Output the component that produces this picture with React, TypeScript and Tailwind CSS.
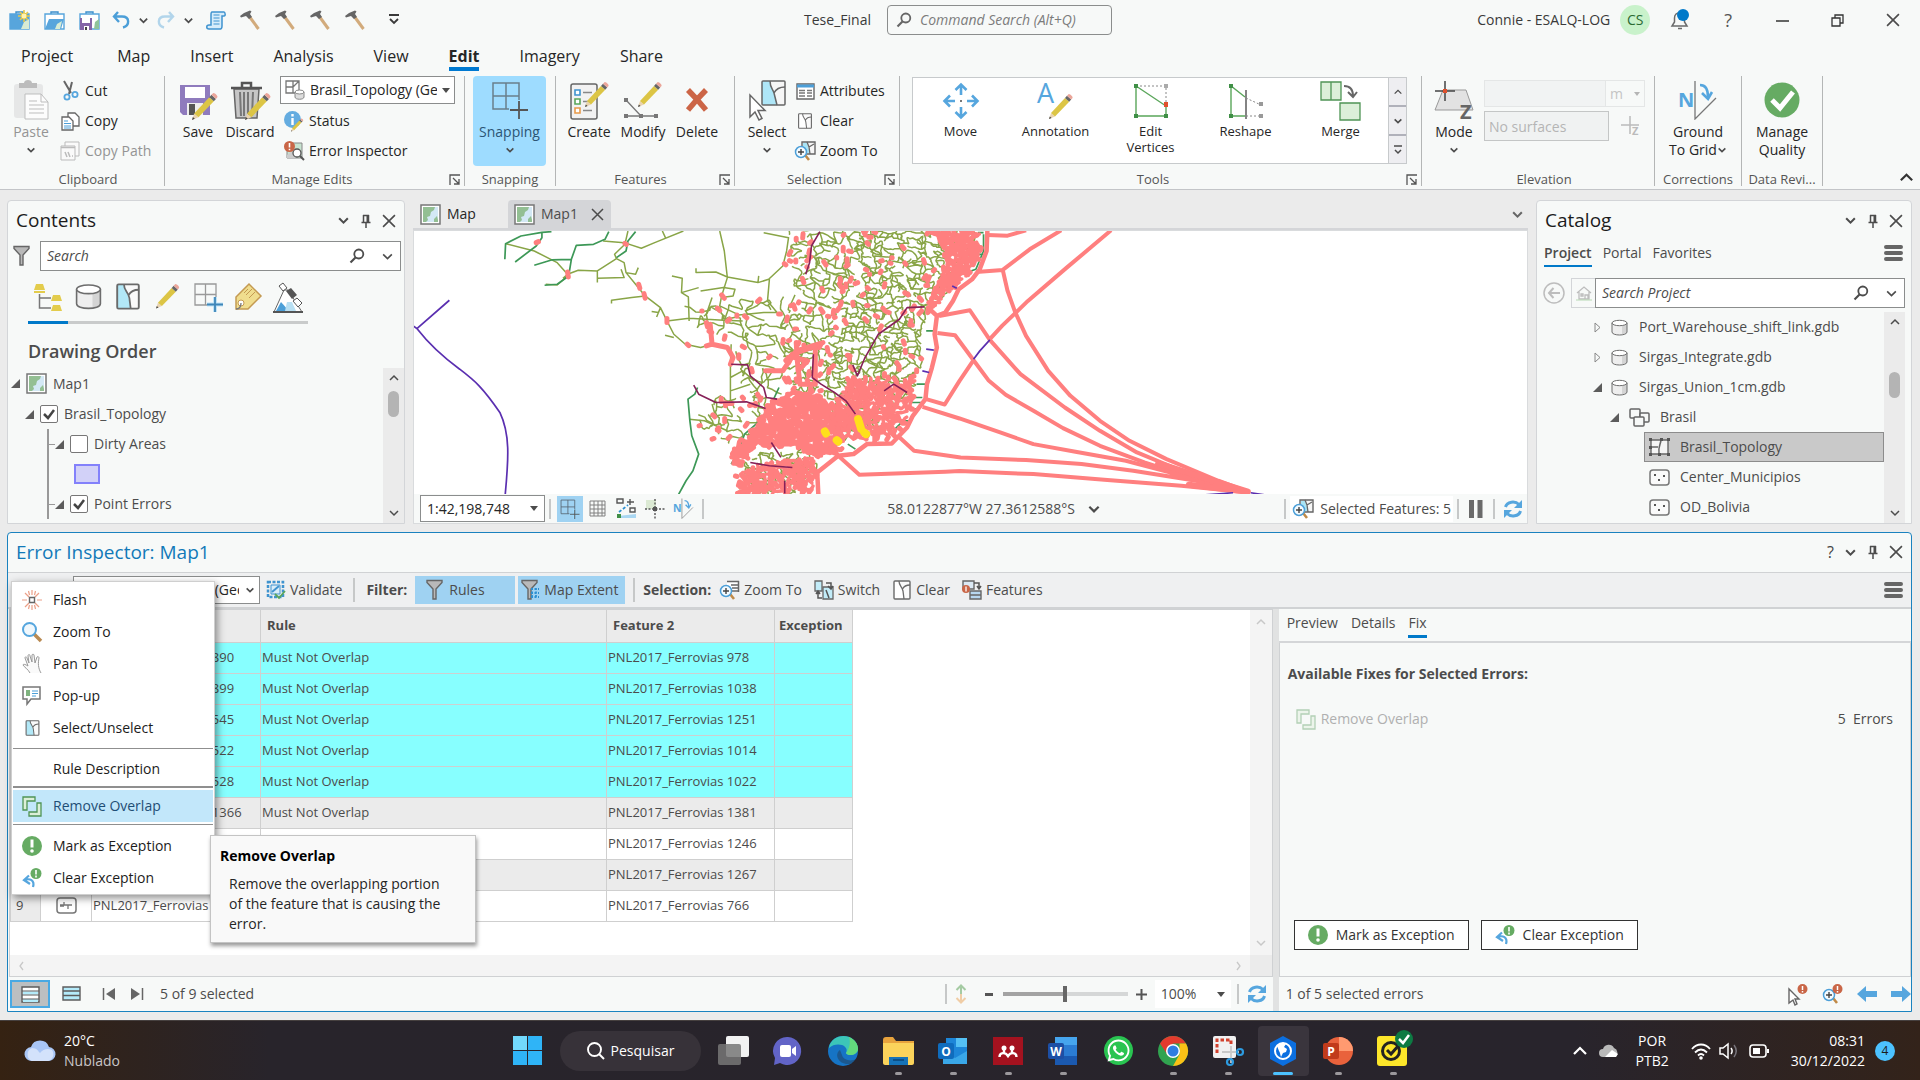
import type { ReactNode } from 'react'
import clsx from 'clsx'
import { FaWhatsapp } from 'react-icons/fa'

type Point = [number, number]

/* ---------- shared glyphs ---------- */

function Svg({ w, h = w, className, children }: { w: number; h?: number; className?: string; children: ReactNode }) {
  return (
    <svg width={w} height={h} viewBox={`0 0 ${w} ${h}`} fill="none" aria-hidden="true" className={clsx('shrink-0 overflow-visible', className)}>
      {children}
    </svg>
  )
}

function Chevron({ up = false, w = 12, color = '#4c4c4c', bold = false }: { up?: boolean; w?: number; color?: string; bold?: boolean }) {
  return (
    <svg width={w} height={w} viewBox="0 0 12 12" fill="none" stroke={color} strokeWidth={bold ? 1.9 : 1.5} aria-hidden="true" className="pointer-events-none shrink-0">
      <path d={up ? 'M2 8l4-4 4 4' : 'M2 4l4 4 4-4'} />
    </svg>
  )
}

function Caret() {
  return (
    <Svg w={8} h={5} className="pointer-events-none">
      <path d="M0 0h8L4 5z" fill="#4c4c4c" />
    </Svg>
  )
}

// Pencil drawn in a 24 unit box, tip at the lower left.
function Pencil({ x = 0, y = 0, s = 1 }: { x?: number; y?: number; s?: number }) {
  return (
    <g transform={`translate(${x} ${y}) scale(${s})`}>
      <path d="M0 24l2-6 4 3.500z" fill="#e9d3b0" />
      <path d="M0 24l.8-2.600 1.800 1.500z" fill="#444" />
      <path d="M2 18L16 3l4.200 3.800L6 21.500z" fill="#dcc545" />
      <path d="M16 3l2-2.200 4.200 3.800-2 2.200z" fill="#666" />
      <path d="M18 .8l1.500-1.600c1-1 5 2.800 4 3.800l-1.300 1.600z" fill="#eba69a" />
    </g>
  )
}

function SearchIcon({ w = 16, color = '#4c4c4c' }: { w?: number; color?: string }) {
  return (
    <svg width={w} height={w} viewBox="0 0 16 16" fill="none" stroke={color} aria-hidden="true" className="shrink-0">
      <circle cx="9.800" cy="6" r="4.500" strokeWidth="1.800" />
      <path d="M6.500 9.500L1.500 14.500" strokeWidth="2.200" />
    </svg>
  )
}

function PinIcon() {
  return (
    <Svg w={12} h={14}>
      <path d="M3.500 1v7M8.500 1v7M3 1.500h6M1.500 8.500h9M6 9v5" stroke="#4c4c4c" strokeWidth="1.500" />
      <path d="M7.500 1v7" stroke="#4c4c4c" strokeWidth="2" />
    </Svg>
  )
}

function CloseIcon({ w = 13 }: { w?: number }) {
  return (
    <svg width={w} height={w} viewBox="0 0 13 13" stroke="#4c4c4c" strokeWidth="1.500" aria-hidden="true" className="shrink-0">
      <path d="M1 1l11 11M12 1L1 12" />
    </svg>
  )
}

function BurgerIcon() {
  return (
    <Svg w={19} h={18}>
      <path d="M2 3h15M2 9h15M2 15h15" stroke="#666" strokeWidth="4" strokeLinecap="round" />
    </Svg>
  )
}

function RefreshIcon() {
  return (
    <Svg w={20}>
      <path d="M2.500 8C4 2.500 12 1.500 16 5.500M17.500 12C16 17.500 8 18.500 4 14.500" stroke="#56a6de" strokeWidth="3" />
      <path d="M19 1v8h-8zM1 19v-8h8z" fill="#56a6de" />
    </Svg>
  )
}

function MapIcon() {
  return (
    <Svg w={21}>
      <path d="M1 1h19v19H1z" fill="#fff" stroke="#777" strokeWidth="1.500" />
      <path d="M3 3h15v15H3z" fill="#d3e8f5" />
      <path d="M3 3h12l-1 3-3 2-1 4-3 1 1 3-2 2H3zM14 15l3-3 1 4v2h-4z" fill="#93bf93" />
    </Svg>
  )
}

function FunnelIcon({ extent = false }: { extent?: boolean }) {
  return (
    <Svg w={20} h={22}>
      <path d="M2 1.500h15v2L11 10v10H8V10L2 3.500z" fill="#b9b9b9" stroke="#666" strokeWidth="1.400" />
      {extent && <path d="M11 10h8M11 14h8M11 18h8M12 9v10M16 9v10" stroke="#2d8fd0" strokeWidth="1.800" strokeDasharray="2 1.500" />}
    </Svg>
  )
}

function SelectMapIcon({ w = 18, h = 20, fill = '#fff' }: { w?: number; h?: number; fill?: string }) {
  return (
    <svg width={w} height={h} viewBox="0 0 18 20" fill="none" aria-hidden="true" className="shrink-0">
      <rect x="1" y="1" width="16" height="18" rx="1" fill="#fafafa" />
      <path d="M1 1h5l3 8 2 10H1z" fill={fill} />
      <rect x="1" y="1" width="16" height="18" rx="1" stroke="#6a6a6a" strokeWidth="1.400" />
      <path d="M6 1c0 5 3 5 4 10l1 8M9.500 9C11 6 14 5 17 5" stroke="#6a6a6a" strokeWidth="1.300" />
    </svg>
  )
}

function MagnifyPlus() {
  return (
    <>
      <path d="M11 14l4 5" stroke="#c08a48" strokeWidth="2.600" />
      <circle cx="7" cy="11" r="5.500" fill="#f4fbff" stroke="#4c9fd8" strokeWidth="1.500" />
      <path d="M4 11h6M7 8v6" stroke="#444" strokeWidth="1.400" />
    </>
  )
}

function ZoomSelectionIcon() {
  return (
    <Svg w={22} h={20}>
      <path d="M8 1h13v12H8z" fill="#f6f6f6" stroke="#666" strokeWidth="1.400" />
      <path d="M9 2h4l3 10H9z" fill="#a9e4f5" />
      <path d="M13 1l2 5 1 7M15 6l5-3" stroke="#666" strokeWidth="1.300" />
      <MagnifyPlus />
    </Svg>
  )
}

function ZoomTableIcon() {
  return (
    <Svg w={21} h={20}>
      <path d="M8 1h12v11H8z" fill="#fff" />
      <path d="M8 1.500h12M12 5h8M13 8h7M13 11h7M19.500 1v11" stroke="#666" strokeWidth="1.500" />
      <MagnifyPlus />
    </Svg>
  )
}

function DatabaseIcon({ w = 17 }: { w?: number }) {
  return (
    <svg width={w} height={w} viewBox="0 0 17 17" fill="none" aria-hidden="true" className="shrink-0">
      <path d="M1 4v9c0 4 15 4 15 0V4" fill="#eee" />
      <path d="M11 6v9.500c3-.5 5-1.300 5-2.500V4z" fill="#d4d4d4" />
      <path d="M1 4v9c0 4 15 4 15 0V4" stroke="#6d6d6d" />
      <ellipse cx="8.500" cy="4" rx="7.500" ry="2.700" fill="#fff" stroke="#6d6d6d" />
    </svg>
  )
}

function TopologyIcon() {
  return (
    <Svg w={21} h={18}>
      <path d="M2 2h17v14H2z" fill="#f5f5f5" stroke="#666" strokeWidth="1.400" />
      <path d="M12 2c0 5-3 5-2 14M2 9h7M12 2l-2 8" stroke="#666" strokeWidth="1.400" />
      <path d="M0 0h3v3H0zM18 0h3v3h-3zM0 15h3v3H0zM18 15h3v3h-3zM11 0h3v3h-3zM9 15h3v3H9zM0 8h3v3H0z" fill="#555" />
    </Svg>
  )
}

function PointsIcon() {
  return (
    <Svg w={21} h={17}>
      <rect x="1" y="1" width="19" height="15" rx="3" fill="#fafafa" stroke="#777" strokeWidth="1.500" />
      <path d="M5 5h2v2H5zM14 6h2v2h-2zM9 10h2v2H9z" fill="#555" />
    </Svg>
  )
}

function BoxesIcon() {
  return (
    <Svg w={21} h={19}>
      <g fill="#f7f9f8" stroke="#666" strokeWidth="1.500">
        <rect x="1" y="1" width="10" height="9" rx="1" />
        <rect x="11" y="5" width="9" height="9" rx="1" />
        <rect x="5" y="9" width="10" height="9" rx="1" />
      </g>
    </Svg>
  )
}

function SnapIcon({ color = '#6a7f8c', w = 28 }: { color?: string; w?: number }) {
  return (
    <svg width={w} height={w} viewBox="0 0 38 38" fill="none" aria-hidden="true" className="shrink-0">
      <path d="M2 2h26v26H2zM15 2v26M2 15h26" stroke={color} strokeWidth="1.500" />
      <path d="M27 19v19M18 29h18" stroke="#9edcff" strokeWidth="5" />
      <path d="M28 20v18M19 29h18" stroke="#555" strokeWidth="1.800" />
    </svg>
  )
}

function OverlapIcon({ faded = false }: { faded?: boolean }) {
  return (
    <Svg w={20} h={21} className={faded ? 'opacity-40' : undefined}>
      <g fill="#dcefd8" stroke="#4f9455" strokeWidth="1.300">
        <path d="M1 1h12v4H5v9H1z" />
        <path d="M19 7v13H7v-4h8V7z" />
      </g>
    </Svg>
  )
}

function ExclaimIcon() {
  return (
    <Svg w={20}>
      <circle cx="10" cy="10" r="10" fill="#66ab63" />
      <path d="M10 3.500v8" stroke="#fff" strokeWidth="3" />
      <circle cx="10" cy="15" r="1.800" fill="#fff" />
    </Svg>
  )
}

function ClearExceptionIcon() {
  return (
    <Svg w={20}>
      <circle cx="14" cy="5.500" r="5.500" fill="#66ab63" />
      <path d="M14 2v4.500M14 7.500v2" stroke="#fff" strokeWidth="1.600" />
      <path d="M2 12c6-2 11 0 9 7M7 7.500L2 12l6 4" stroke="#56a6de" strokeWidth="2.200" />
    </Svg>
  )
}

function MoveArrows() {
  return (
    <path
      d="M18 2v10M18 24v10M2 18h10M24 18h10M12.500 7L18 1.500 23.500 7M12.500 29l5.500 5.500 5.500-5.500M7 12.500L1.500 18 7 23.500M29 12.500l5.500 5.500-5.500 5.500"
      stroke="#56a6de"
      strokeWidth="2.600"
    />
  )
}

function NorthAngle({ w = 40 }: { w?: number }) {
  return (
    <svg width={w} height={w} viewBox="0 0 40 40" fill="none" aria-hidden="true" className="shrink-0">
      <text x="0" y="27" fontSize="20" fontWeight="700" fill="#56a6de">N</text>
      <path d="M17 1v38L38 18" stroke="#777" strokeWidth="1.300" />
      <path d="M22 5c6 0 8 5 8 12" stroke="#56a6de" strokeWidth="2.600" />
      <path d="M24 13l6 6 4-7" stroke="#56a6de" strokeWidth="2.600" />
    </svg>
  )
}

/* ---------- title bar ---------- */

function ProjectIcon({ kind }: { kind: 'new' | 'open' | 'save' }) {
  return (
    <Svg w={21} h={20}>
      <path d="M7 5V2h7v3" stroke="#3c8fcc" strokeWidth="1.400" />
      <path d="M1 4h19v15H1z" fill={kind === 'new' ? '#57a5dc' : '#fff'} stroke="#57a5dc" strokeWidth="1.400" />
      {kind === 'new' && (
        <>
          <path d="M12 19l3-7 5-3v10z" fill="#d8ecd4" />
          <path d="M15 0v12M9 6h12M11 2l8 8M19 2l-8 8" stroke="#e3c84f" strokeWidth="1.600" />
          <circle cx="15" cy="6" r="3" fill="#fff3b0" stroke="#e3c84f" />
        </>
      )}
      {kind === 'open' && <path d="M1 19L5 9h15l-3 10z" fill="#57a5dc" />}
      {kind === 'open' && <path d="M11 19l2-5 5-3-2 8z" fill="#d8ecd4" />}
      {kind === 'save' && (
        <>
          <path d="M15 19l1-7 4-3v10z" fill="#8fc39a" />
          <path d="M1 8h12v12H1z" fill="#8566a8" />
          <path d="M3 8h8v5H3zM5 16h5v4H5z" fill="#fff" />
          <path d="M6 17h2v3H6z" fill="#444" />
        </>
      )}
    </Svg>
  )
}

function UndoIcon({ flip = false }: { flip?: boolean }) {
  return (
    <Svg w={18} h={18} className={flip ? '-scale-x-100 opacity-40' : undefined}>
      <path d="M6 1L2 5.500 7 11M2 5.500h8c8 0 8 9 1 11" stroke="#4c9fd8" strokeWidth="2.400" />
    </Svg>
  )
}

function HammerIcon() {
  return (
    <Svg w={20}>
      <path d="M9 6l9.500 13" stroke="#d2ab7c" strokeWidth="3" />
      <path d="M0 6l4-3 6-2.500 1.500 1L10 4l2 3-3 2-3-3-5 1.500z" fill="#666" />
    </Svg>
  )
}

function TitleBar() {
  return (
    <header className="grid h-10 grid-cols-[1fr_auto_1fr] items-center text-sm text-[#3a3a3a]">
      <div className="flex items-center pl-[9px]">
        <button aria-label="New project" className="mr-3.5"><ProjectIcon kind="new" /></button>
        <button aria-label="Open project" className="mr-3.5"><ProjectIcon kind="open" /></button>
        <button aria-label="Save project" className="mr-3"><ProjectIcon kind="save" /></button>
        <button aria-label="Undo" className="mr-2"><UndoIcon /></button>
        <button aria-label="Undo list" className="mr-2"><Chevron w={11} bold /></button>
        <button aria-label="Redo" className="mr-2"><UndoIcon flip /></button>
        <button aria-label="Redo list" className="mr-3"><Chevron w={11} bold /></button>
        <button aria-label="Python" className="mr-3.5">
          <Svg w={20}>
            <path d="M6 2h12c1 0 2 4 0 4h-2v10c0 3-1 3-3 3H3c-3 0-3-4 0-4h2V5c0-2 0-3 1-3z" fill="#d6ecfa" stroke="#3f93cf" strokeWidth="1.500" />
            <path d="M7.500 5h6M7.500 8h6M7.500 11h6M7.500 14h6" stroke="#3f93cf" strokeWidth="1.200" />
          </Svg>
        </button>
        {[1, 2, 3, 4].map((n) => (
          <button key={n} aria-label={`Tool ${n}`} className="mr-[15px]"><HammerIcon /></button>
        ))}
        <button aria-label="Customize toolbar" className="ml-2">
          <Svg w={12} h={12}><path d="M1 1h10M2 5l4 4 4-4" stroke="#3a3a3a" strokeWidth="1.800" /></Svg>
        </button>
      </div>
      <div className="flex items-center gap-4 pr-1">
        <span>Tese_Final</span>
        <label className="flex h-[30px] w-[225px] items-center gap-2 rounded border border-[#8b8d8d] px-2">
          <SearchIcon w={16} color="#666" />
          <input aria-label="Command Search" placeholder="Command Search (Alt+Q)" className="min-w-0 flex-1 italic outline-none placeholder:text-[#7c7c7c]" />
        </label>
      </div>
      <div className="flex items-center justify-end pr-5">
        <span className="mr-2.5">Connie - ESALQ-LOG</span>
        <button className="mr-5 flex size-[30px] items-center justify-center rounded-full bg-[#c9f2cb] text-sm text-[#2b6a33]">CS</button>
        <button aria-label="Notifications" className="mr-[34px]">
          <Svg w={20} h={22}>
            <path d="M2 17h15l-2.500-4V9c0-7-10-7-10 0v4zM8 19.500h4" stroke="#6a6a6a" strokeWidth="1.500" />
            <circle cx="13" cy="6" r="6" fill="#0079c9" />
          </Svg>
        </button>
        <button aria-label="Help" className="mr-11 text-lg text-[#555]">?</button>
        <button aria-label="Minimize" className="mr-[42px]"><Svg w={13}><path d="M0 7h13" stroke="#333" strokeWidth="1.500" /></Svg></button>
        <button aria-label="Restore" className="mr-[42px]">
          <Svg w={13}><path d="M1 4h8v8H1zM4 4V1h8v8H9" stroke="#333" strokeWidth="1.300" /></Svg>
        </button>
        <button aria-label="Close window"><CloseIcon w={14} /></button>
      </div>
    </header>
  )
}

/* ---------- ribbon ---------- */

function RibbonTabs() {
  const tabs = ['Map', 'Insert', 'Analysis', 'View', 'Edit', 'Imagery', 'Share']
  return (
    <nav className="flex h-8 pl-[21px] text-base text-[#262626]">
      <button className="mr-11 flex flex-col"><span className="pt-1.5 leading-[21px]">Project</span></button>
      <div className="flex gap-10">
        {tabs.map((tab) => (
          <button key={tab} className={clsx('flex flex-col', tab === 'Edit' && 'font-bold')}>
            <span className="pt-1.5 leading-[21px]">{tab}</span>
            {tab === 'Edit' && <span className="h-1 w-full bg-[#0079d1]" />}
          </button>
        ))}
      </div>
    </nav>
  )
}

function RibbonGroup({ label, launcher = false, className, children }: { label: string; launcher?: boolean; className: string; children: ReactNode }) {
  return (
    <section className={clsx('flex h-[110px] shrink-0 flex-col border-r border-[#b4b6b6]', className)}>
      <div className="flex h-24 items-start">{children}</div>
      <div className="flex items-center leading-[14px] text-[#555]">
        <span className="flex-1 text-center text-[13px]">{label}</span>
        {launcher && (
          <button aria-label={`${label} options`} className="mr-1">
            <Svg w={11}><path d="M1 11V1h10M4 4l6 6M10 5v5H5" stroke="#555" strokeWidth="1.300" /></Svg>
          </button>
        )}
      </div>
    </section>
  )
}

function BigButton({ icon, label, chevron = false, active = false, disabled = false, className }: { icon: ReactNode; label: string; chevron?: boolean; active?: boolean; disabled?: boolean; className: string }) {
  return (
    <button
      disabled={disabled}
      className={clsx(
        'flex shrink-0 flex-col items-center text-sm leading-[18px]',
        active ? 'h-[90px] rounded bg-[#9edcff] text-[#2c5574]' : disabled ? 'text-[#949494]' : 'text-[#262626]',
        className,
      )}
    >
      <span className="flex h-[47px] items-center">{icon}</span>
      <span className="whitespace-pre">{label}</span>
      {chevron && <span className="mt-1"><Chevron w={10} bold /></span>}
    </button>
  )
}

function SmallButton({ icon, label, disabled = false }: { icon: ReactNode; label: string; disabled?: boolean }) {
  return (
    <button disabled={disabled} className={clsx('flex h-[30px] items-center gap-[5px] text-sm whitespace-nowrap', disabled ? 'text-[#949494]' : 'text-[#262626]')}>
      <span className="flex w-5 justify-center">{icon}</span>
      {label}
    </button>
  )
}

function GalleryItem({ icon, label }: { icon: ReactNode; label: string }) {
  return (
    <button className="flex flex-1 flex-col items-center text-[13px] leading-4 text-[#262626]">
      <span className="flex h-[45px] items-center">{icon}</span>
      <span className="w-14 text-center">
        <span className="flex justify-center">{label.split(' ')[0]}</span>
        {label.split(' ')[1]}
      </span>
    </button>
  )
}

function Ribbon() {
  return (
    <div className="flex border-b border-[#c3c5c8] pt-1 pb-[3px]">
      <RibbonGroup label="Clipboard" className="w-[165px] pl-3">
        <BigButton
          className="w-[38px]"
          label="Paste"
          chevron
          disabled
          icon={
            <Svg w={38} h={40}>
              <rect x="2" y="4" width="29" height="34" rx="3" fill="#e6e7e7" />
              <path d="M7 3h5c0-4 8-4 8 0h5v5H7z" fill="#bcbcbc" />
              <path d="M13 14h16l7 8v17H13z" fill="#fcfcfc" stroke="#bdbdbd" />
              <path d="M29 14v8h7M17 21h8M17 25h15M17 29h15M17 33h15" stroke="#bdbdbd" />
            </Svg>
          }
        />
        <div className="ml-2.5 flex flex-col">
          <SmallButton
            label="Cut"
            icon={
              <Svg w={20}>
                <path d="M4 0l7 12M12 1L9 13" stroke="#666" strokeWidth="2" />
                <circle cx="7" cy="16" r="2.600" stroke="#56a6de" strokeWidth="1.800" />
                <circle cx="15" cy="13.500" r="2.600" stroke="#56a6de" strokeWidth="1.800" />
              </Svg>
            }
          />
          <SmallButton
            label="Copy"
            icon={
              <Svg w={19}>
                <path d="M7 1h7l4 4v9H7z" fill="#fff" stroke="#666" strokeWidth="1.300" />
                <path d="M1 5h7l4 4v9H1z" fill="#fff" stroke="#666" strokeWidth="1.300" />
                <path d="M3 9h4M3 11.500h7M3 14h7M3 16h7" stroke="#4c9fd8" />
              </Svg>
            }
          />
          <SmallButton
            disabled
            label="Copy Path"
            icon={
              <Svg w={20}>
                <path d="M5 1h14v14H5z" fill="#fafafa" stroke="#bbb" />
                <path d="M1 5h14v14H1z" fill="#fafafa" stroke="#bbb" />
                <path d="M1 6.500h14M5 11l2 5M8 11l2 5M12 15h1" stroke="#bbb" strokeWidth="1.500" />
              </Svg>
            }
          />
        </div>
      </RibbonGroup>

      <RibbonGroup label="Manage Edits" launcher className="w-[300px] pl-2.5">
        <BigButton
          className="w-[46px]"
          label="Save"
          icon={
            <Svg w={40}>
              <path d="M2 5h30v30H5l-3-3z" fill="#8f7bbd" />
              <path d="M7 7h20v11H7z" fill="#fff" />
              <path d="M9 23h16v12H9z" fill="#eee" />
              <path d="M11 24h6v11h-6z" fill="#555" />
              <Pencil x={14} y={14} s={1.080} />
            </Svg>
          }
        />
        <BigButton
          className="ml-[3px] w-[52px]"
          label="Discard"
          icon={
            <Svg w={40}>
              <path d="M4 9h25l-2 29H6z" fill="#c6c6c6" stroke="#666" strokeWidth="1.500" />
              <path d="M10 12l1 24M14 12v24M18 12v24M23 12l-1 24" stroke="#777" strokeWidth="2" />
              <path d="M1 8h31M12 7V3h9v4" stroke="#555" strokeWidth="2.500" />
              <Pencil x={15} y={14} s={1.080} />
            </Svg>
          }
        />
        <div className="ml-1 flex flex-col">
          <div className="flex h-7 w-[175px] items-center gap-[5px] border border-[#8b8d8d] bg-white px-1">
            <Svg w={20}>
              <path d="M1 1h13v12H1zM8 1v12M1 7h7M14 1l-6 6" stroke="#777" strokeWidth="1.300" />
              <path d="M10 12v5c0 3 9 3 9 0v-5" fill="#ddd" stroke="#888" />
              <ellipse cx="14.500" cy="12" rx="4.500" ry="2" fill="#fff" stroke="#888" />
            </Svg>
            <select aria-label="Topology" className="min-w-0 flex-1 appearance-none overflow-hidden text-sm text-[#262626] outline-none">
              <option>Brasil_Topology (Geodatabase)</option>
            </select>
            <Caret />
          </div>
          <div className="flex flex-col pt-0.5 pl-1">
            <SmallButton
              label="Status"
              icon={
                <Svg w={20}>
                  <circle cx="8.500" cy="8.500" r="8.500" fill="#64ace0" />
                  <path d="M8.500 7v7M8.500 3v2.500" stroke="#fff" strokeWidth="2.400" />
                  <Pencil x={7} y={8} s={0.520} />
                </Svg>
              }
            />
            <SmallButton
              label="Error Inspector"
              icon={
                <Svg w={20}>
                  <path d="M3 2h15v15H3z" fill="#c7e3d0" stroke="#888" />
                  <path d="M3 14l5-4 4 7H3z" fill="#ccc" />
                  <circle cx="13" cy="12" r="4" fill="#fff" stroke="#555" strokeWidth="1.300" />
                  <path d="M16 15l4 4" stroke="#555" strokeWidth="2" />
                  <circle cx="5.500" cy="5.500" r="5.500" fill="#c96647" />
                  <path d="M5.500 2v4.500M5.500 7.800v1.500" stroke="#fff" strokeWidth="1.600" />
                </Svg>
              }
            />
          </div>
        </div>
      </RibbonGroup>

      <RibbonGroup label="Snapping" className="w-[91px] px-2">
        <BigButton className="w-[73px]" label="Snapping" chevron active icon={<SnapIcon w={38} />} />
      </RibbonGroup>

      <RibbonGroup label="Features" launcher className="w-[179px] pl-1.5">
        <BigButton
          className="w-[54px]"
          label="Create"
          icon={
            <Svg w={40}>
              <rect x="2" y="4" width="26" height="35" rx="2" fill="#f2f2f2" stroke="#666" strokeWidth="1.500" />
              <g strokeWidth="1.600" fill="#fff">
                <path d="M6 10h5v5H6z" stroke="#3f93cf" />
                <path d="M6 19h5v5H6z" stroke="#5aa65a" />
                <path d="M6 28h5v5H6z" stroke="#e89a4a" />
                <path d="M14 12.500h9M14 21.500h6M14 30.500h9" stroke="#888" />
              </g>
              <Pencil x={16} y={3} s={1} />
            </Svg>
          }
        />
        <BigButton
          className="w-[54px]"
          label="Modify"
          icon={
            <Svg w={40}>
              <path d="M3 20l15 16M3 36h31" stroke="#777" strokeWidth="1.300" />
              <path d="M1 18h4v4H1zM1 34h4v4H1zM16 34h4v4h-4zM31 34h4v4h-4z" fill="#777" />
              <Pencil x={15} y={3} s={1} />
            </Svg>
          }
        />
        <BigButton
          className="w-[54px]"
          label="Delete"
          icon={
            <Svg w={24} h={24}>
              <path d="M3 2l9 9.500L21 2M3 22l9-10.500L21 22" stroke="#cc6546" strokeWidth="5.500" />
            </Svg>
          }
        />
      </RibbonGroup>

      <RibbonGroup label="Selection" launcher className="w-[165px] pl-2.5">
        <BigButton
          className="w-11"
          label="Select"
          chevron
          icon={
            <Svg w={38} h={40}>
              <rect x="14" y="1" width="23" height="24" rx="1" fill="#f6f6f6" />
              <path d="M14 1h8c0 7 3 8 4 12l3 12H14z" fill="#aee6f7" />
              <rect x="14" y="1" width="23" height="24" rx="1" stroke="#666" strokeWidth="1.500" />
              <path d="M22 1c0 7 3 8 4 12l3 12M26 13c2-4 5-6 11-6" stroke="#666" strokeWidth="1.500" />
              <path d="M2 15v22l5-5 4 8 3-1.500-4-8h7z" fill="#fff" stroke="#666" strokeWidth="1.500" />
            </Svg>
          }
        />
        <div className="ml-1.5 flex flex-col">
          <SmallButton
            label="Attributes"
            icon={
              <Svg w={19} h={17}>
                <path d="M1 1h17v15H1z" fill="#fff" stroke="#666" strokeWidth="1.400" />
                <path d="M1 3h17" stroke="#4c9fd8" strokeWidth="3" />
                <path d="M3 7.500h6M11 7.500h5M3 10h6M11 10h5M3 13h6M11 13h5" stroke="#777" strokeWidth="1.300" />
              </Svg>
            }
          />
          <SmallButton label="Clear" icon={<SelectMapIcon w={16} h={16} />} />
          <SmallButton label="Zoom To" icon={<ZoomSelectionIcon />} />
        </div>
      </RibbonGroup>

      <RibbonGroup label="Tools" launcher className="w-[522px]">
        <div className="mt-px mr-3.5 ml-3 flex h-[87px] flex-1 border border-[#c7cacc] bg-white">
          <div className="flex flex-1">
            <GalleryItem label="Move" icon={<Svg w={36}><MoveArrows /><path d="M17 17h2v2h-2z" fill="#777" /></Svg>} />
            <GalleryItem
              label="Annotation"
              icon={
                <Svg w={40}>
                  <text x="1" y="22" fontSize="27" fill="#56a6de">A</text>
                  <Pencil x={13} y={14} s={1} />
                </Svg>
              }
            />
            <GalleryItem
              label="Edit Vertices"
              icon={
                <Svg w={36}>
                  <path d="M3 3l30 20v10H3z" stroke="#5aa65a" strokeWidth="1.400" />
                  <path d="M3 3h30v18" stroke="#888" strokeDasharray="2 2" />
                  <path d="M1 1h4v4H1zM1 31h4v4H1zM31 31h4v4h-4z" fill="#3f8f46" />
                  <path d="M31 1h4v4h-4z" fill="#aaa" />
                  <path d="M31 19h4v5h-4z" fill="#e0502c" />
                </Svg>
              }
            />
            <GalleryItem
              label="Reshape"
              icon={
                <Svg w={36}>
                  <path d="M3 33V3l14 11M3 33h14" stroke="#5aa65a" strokeWidth="1.400" />
                  <path d="M18 7v29" stroke="#777" strokeWidth="1.800" />
                  <path d="M18 15l15 7M18 33h15" stroke="#888" strokeDasharray="2 2" />
                  <path d="M1 1h4v4H1zM1 31h4v4H1z" fill="#3f8f46" />
                  <path d="M31 19h4v4h-4zM31 31h4v4h-4z" fill="#999" />
                </Svg>
              }
            />
            <GalleryItem
              label="Merge"
              icon={
                <Svg w={42} h={40}>
                  <g fill="#dcefd9" stroke="#4f9455" strokeWidth="1.300">
                    <path d="M1 1h20v18H1zM11 1v18M20 22h20v17H20z" />
                  </g>
                  <path d="M24 5c6 0 9 3 9 10M28 11l5 5 4-5" stroke="#666" strokeWidth="2" />
                </Svg>
              }
            />
          </div>
          <div className="flex w-[18px] flex-col divide-y-2 divide-[#b0b1ba] border-l border-[#c7cacc] bg-[#eeeef1]">
            <button aria-label="Scroll up" className="flex flex-1 items-center justify-center"><Chevron w={10} up /></button>
            <button aria-label="Scroll down" className="flex flex-1 items-center justify-center"><Chevron w={10} bold /></button>
            <button aria-label="More tools" className="flex flex-1 items-center justify-center">
              <Svg w={10}><path d="M1 1h8M2 5l3 3 3-3" stroke="#4c4c4c" strokeWidth="1.500" /></Svg>
            </button>
          </div>
        </div>
      </RibbonGroup>

      <RibbonGroup label="Elevation" className="w-[233px] pl-3">
        <BigButton
          className="w-10"
          label="Mode"
          chevron
          icon={
            <Svg w={40}>
              <path d="M9 10h23l7 20H1z" fill="#e2e2e2" stroke="#999" />
              <path d="M11 1v20M1 11h20" stroke="#444" strokeWidth="1.500" />
              <path d="M9 9h4v4H9z" fill="#e0502c" />
              <text x="26" y="39" fontSize="20" fontWeight="700" fill="#666">Z</text>
            </Svg>
          }
        />
        <div className="ml-2.5 flex flex-col gap-1 pt-1 text-sm">
          <div className="flex">
            <input aria-label="Elevation" disabled className="h-[27px] w-[122px] border border-[#e4e6e6] bg-[#f1f3f3]" />
            <div className="flex w-[39px] items-center justify-between border border-l-0 border-[#e4e6e6] px-1 text-[#c4c4c4]">
              <select aria-label="Elevation unit" disabled className="min-w-0 flex-1 appearance-none opacity-100">
                <option>m</option>
              </select>
              <Svg w={6} h={4}><path d="M0 0h6L3 4z" fill="#b5b5b5" /></Svg>
            </div>
          </div>
          <div className="flex items-center gap-3">
            <input aria-label="Surface" disabled defaultValue="No surfaces" className="h-[30px] w-[125px] border border-[#c4c6c6] bg-[#f0f2f2] px-1 text-[#b5b5b5]" />
            <Svg w={20}>
              <path d="M9 0v18M0 9h18" stroke="#bbb" strokeWidth="1.500" />
              <text x="11" y="19" fontSize="11" fontWeight="700" fill="#bbb">Z</text>
            </Svg>
          </div>
        </div>
      </RibbonGroup>

      <RibbonGroup label="Corrections" className="w-[87px]">
        <button className="flex flex-1 flex-col items-center text-sm leading-[18px] text-[#262626]">
          <span className="flex h-[47px] items-center"><NorthAngle /></span>
          Ground
          <span className="flex items-center">To Grid<Chevron w={10} bold /></span>
        </button>
      </RibbonGroup>
      <RibbonGroup label="Data Revi..." className="w-[81px]">
        <button className="flex flex-1 flex-col items-center text-sm leading-[18px] text-[#262626]">
          <span className="flex h-[47px] items-center">
            <Svg w={36}>
              <circle cx="18" cy="18" r="17.500" fill="#66ab63" />
              <path d="M8 18l8 8L29 10" stroke="#fff" strokeWidth="5" />
            </Svg>
          </span>
          Manage
          <span>Quality</span>
        </button>
      </RibbonGroup>
      <button aria-label="Collapse ribbon" className="ml-auto self-end pr-[5px]"><Chevron w={17} up color="#333" /></button>
    </div>
  )
}

/* ---------- dock panes ---------- */

function PaneHeader({ title, active = false, help = false }: { title: string; active?: boolean; help?: boolean }) {
  return (
    <div className="flex items-center justify-between px-2">
      <h2 className={clsx('text-[19px]', active ? 'text-[#1279b8]' : 'text-[#1c1c1c]')}>{title}</h2>
      <div className="flex items-center gap-2.5">
        {help && <button aria-label="Help" className="text-base text-[#444]">?</button>}
        <button aria-label={`${title} menu`}><Chevron w={13} bold /></button>
        <button aria-label={`Pin ${title}`}><PinIcon /></button>
        <button aria-label={`Close ${title}`}><CloseIcon w={14} /></button>
      </div>
    </div>
  )
}

// "before" and "after" weight the free track above and below the thumb.
function ScrollTrack({ before, after }: { before: string; after: string }) {
  return (
    <div className="flex w-[21px] shrink-0 flex-col items-center bg-[#ebebeb] py-1">
      <Chevron up />
      <div className={before} />
      <div className="h-[26px] w-[11px] rounded-full bg-[#b4b4b4]" />
      <div className={after} />
      <Chevron />
    </div>
  )
}

function Expander({ open = true }: { open?: boolean }) {
  return open ? (
    <Svg w={9}><path d="M9 0v9H0z" fill="#5c5c5c" /></Svg>
  ) : (
    <Svg w={9} h={11}><path d="M2 1l5 4.500L2 10z" stroke="#888" /></Svg>
  )
}

function TreeCheck({ label, checked }: { label: string; checked: boolean }) {
  return (
    <label className="flex items-center gap-1.5">
      <span className="relative flex size-[18px]">
        <input type="checkbox" defaultChecked={checked} className="peer size-[18px] appearance-none rounded-xs border border-[#777] bg-white" />
        <svg viewBox="0 0 18 18" fill="none" aria-hidden="true" className="pointer-events-none absolute inset-0 hidden peer-checked:block">
          <path d="M4 9l4 4 6-8" stroke="#444" strokeWidth="2.500" />
        </svg>
      </span>
      {label}
    </label>
  )
}

function ContentsPane() {
  const views = [
    {
      name: 'List by drawing order',
      icon: (
        <Svg w={28}>
          <path d="M2 1h7l2 6H0zM19 12h7l2 6H17zM19 22h7l2 6H17z" fill="#e3cc4c" />
          <path d="M0 9h11" stroke="#e3cc4c" strokeWidth="2" />
          <path d="M5.500 11v14H17M5.500 15H17" stroke="#777" strokeWidth="1.500" />
        </Svg>
      ),
    },
    { name: 'List by data source', icon: <DatabaseIcon w={27} /> },
    { name: 'List by selection', icon: <SelectMapIcon w={26} h={27} fill="#b2e8f7" /> },
    { name: 'List by editing', icon: <Svg w={26}><Pencil x={1} y={2} s={0.980} /></Svg> },
    {
      name: 'List by snapping',
      icon: (
        <Svg w={29}>
          <path d="M1 1h21v21H1zM11.500 1v21M1 11.500h21" stroke="#999" strokeWidth="1.300" />
          <path d="M21 14v15M13 21.500h16" stroke="#bfe3f7" strokeWidth="4" />
          <path d="M21 14v15M13 21.500h16" stroke="#3f86b8" strokeWidth="1.800" />
        </Svg>
      ),
    },
    {
      name: 'List by labeling',
      icon: (
        <Svg w={28}>
          <path d="M2 14L15 1l12 12-13 13H2z" fill="#f0dd8e" stroke="#c49a52" strokeWidth="1.500" />
          <path d="M12 12l6-6M15 15l6-6M10 10l4-4" stroke="#c49a52" />
          <circle cx="7" cy="20" r="3" fill="#fff" stroke="#c49a52" />
          <path d="M7 20c0 4-2 6-5 6" stroke="#777" strokeWidth="1.300" />
        </Svg>
      ),
    },
    {
      name: 'List by imagery',
      icon: (
        <Svg w={30}>
          <path d="M1 29L11 7h4l14 22z" fill="#fff" stroke="#666" />
          <path d="M3 28l5-9 8 9z" fill="#4c9fd8" />
          <path d="M14 19h5l4 9H12z" fill="#b9e0f3" />
          <path d="M0 29h30" stroke="#555" strokeWidth="2" />
          <path d="M6 3l4-3 4 5-4 3zM20 18l4-3 5 5-4 4z" fill="#fff" stroke="#555" />
          <path d="M13 8l5-3 6 7-5 4z" fill="#555" />
        </Svg>
      ),
    },
  ]
  return (
    <section className="flex flex-col rounded-t border border-[#d3d5d8] bg-[#f7f9f8] text-sm text-[#4c4c4c]">
      <div className="flex h-10 flex-col justify-center"><PaneHeader title="Contents" /></div>
      <div className="flex items-center pr-[3px] pl-1">
        <button aria-label="Filter layers" className="w-7"><FunnelIcon /></button>
        <div className="flex h-[30px] flex-1 items-center gap-4 border border-[#8b8d8d] bg-white px-1.5">
          <input aria-label="Search layers" placeholder="Search" className="min-w-0 flex-1 italic outline-none placeholder:text-[#4c4c4c]" />
          <button aria-label="Search"><SearchIcon /></button>
          <button aria-label="Search options"><Chevron w={13} /></button>
        </div>
      </div>
      <div className="flex pl-5">
        {views.map((view, i) => (
          <button key={view.name} aria-label={view.name} className={clsx('flex h-[53px] w-10 items-start justify-center border-b-[3px] pt-3', i === 0 ? 'border-[#0079c9]' : 'border-[#c9cbcb]')}>
            {view.icon}
          </button>
        ))}
      </div>
      <h3 className="pt-[11px] pl-5 text-lg leading-[33px] font-semibold">Drawing Order</h3>
      <div className="flex flex-1">
        <ul className="flex-1 pb-1">
          <li className="flex h-[31px] items-center gap-1.5 pl-[3px]"><Expander /><MapIcon /><span>Map1</span></li>
          <li className="flex h-[30px] items-center gap-1.5 pl-[17px]"><Expander /><TreeCheck label="Brasil_Topology" checked /></li>
          <li>
            <ul className="ml-[39px] border-l-2 border-[#999]">
              <li className="flex h-[30px] items-center gap-1.5"><span className="-mr-1.5 h-px w-1.5 bg-[#999]" /><Expander /><TreeCheck label="Dirty Areas" checked={false} /></li>
              <li className="flex h-[30px] items-center pl-[25px]"><span className="h-5 w-[26px] border-2 border-[#8381fb] bg-[#d2d1f8]" /></li>
              <li className="flex h-[30px] items-center gap-1.5"><span className="-mr-1.5 h-px w-1.5 bg-[#999]" /><Expander /><TreeCheck label="Point Errors" checked /></li>
            </ul>
          </li>
        </ul>
        <ScrollTrack before="flex-[1]" after="flex-[13]" />
      </div>
    </section>
  )
}

function CatalogPane() {
  const rows = [
    { label: 'Port_Warehouse_shift_link.gdb', open: false, icon: <DatabaseIcon /> },
    { label: 'Sirgas_Integrate.gdb', open: false, icon: <DatabaseIcon /> },
    { label: 'Sirgas_Union_1cm.gdb', open: true, icon: <DatabaseIcon /> },
  ]
  return (
    <section className="flex flex-col rounded-t border border-[#d3d5d8] bg-[#f7f9f8] text-sm text-[#4c4c4c]">
      <div className="flex h-10 flex-col justify-center"><PaneHeader title="Catalog" /></div>
      <div className="flex h-[37px] items-start justify-between pr-2 pl-[7px]">
        <nav className="flex gap-[11px]">
          <button className="h-[26px] border-b-2 border-[#0079c9] font-semibold">Project</button>
          <button className="h-6">Portal</button>
          <button className="h-6">Favorites</button>
        </nav>
        <button aria-label="Catalog menu" className="pt-[3px]"><BurgerIcon /></button>
      </div>
      <div className="flex items-center pr-1.5 pl-1.5">
        <button aria-label="Back" className="mr-1.5">
          <Svg w={22}>
            <circle cx="11" cy="11" r="10" stroke="#bdbdbd" strokeWidth="1.500" />
            <path d="M17 11H6M10.500 6L6 11l4.500 5" stroke="#bdbdbd" strokeWidth="2" />
          </Svg>
        </button>
        <button aria-label="Home" className="flex h-[30px] w-6 items-center justify-center border border-r-0 border-[#d3d5d8]">
          <Svg w={16}><path d="M1 8l7-6 7 6M3 7v7h10V7M9 14v-4h3v4M5 9h2v2H5z" stroke="#bdbdbd" strokeWidth="1.300" /><path d="M0 15h16" stroke="#b7dab3" /></Svg>
        </button>
        <div className="flex h-[30px] flex-1 items-center gap-4 border border-[#8b8d8d] bg-white px-1.5">
          <input aria-label="Search Project" placeholder="Search Project" className="min-w-0 flex-1 italic outline-none placeholder:text-[#4c4c4c]" />
          <button aria-label="Search"><SearchIcon /></button>
          <button aria-label="Search options"><Chevron w={13} /></button>
        </div>
      </div>
      <div className="flex flex-1 pt-1 pr-1.5">
        <ul className="flex-1">
          {rows.map((row) => (
            <li key={row.label} className="flex h-[30px] items-center pl-14">
              <Expander open={row.open} />
              <span className="mr-[11px] ml-[9px]">{row.icon}</span>
              {row.label}
            </li>
          ))}
          <li className="flex h-[30px] items-center pl-[73px]">
            <Expander />
            <span className="mr-2.5 ml-2.5"><BoxesIcon /></span>
            Brasil
          </li>
          <li className="ml-[107px] flex h-[30px] items-center gap-2.5 border border-[#8c8c8c] bg-[#c9c9c9] px-1"><TopologyIcon />Brasil_Topology</li>
          <li className="ml-[108px] flex h-[30px] items-center gap-2.5 px-1"><PointsIcon />Center_Municipios</li>
          <li className="ml-[108px] flex h-[30px] items-center gap-2.5 px-1"><PointsIcon />OD_Bolivia</li>
        </ul>
        <ScrollTrack before="flex-[2]" after="flex-[5]" />
      </div>
    </section>
  )
}

/* ---------- map ---------- */

function makeRandom(seed: number) {
  let s = seed
  return () => {
    s = (s * 1664525 + 1013904223) % 4294967296
    return s / 4294967296
  }
}

function inside(x: number, y: number, poly: Point[]) {
  let hit = false
  for (let i = 0, j = poly.length - 1; i < poly.length; j = i++) {
    const [xi, yi] = poly[i]
    const [xj, yj] = poly[j]
    if (yi > y !== yj > y && x < ((xj - xi) * (y - yi)) / (yj - yi) + xi) hit = !hit
  }
  return hit
}

// Links the nodes of a jittered grid into a road-like network.
function network(poly: Point[], step: number, keep: number, seed: number) {
  const random = makeRandom(seed)
  const xs = poly.map((p) => p[0])
  const ys = poly.map((p) => p[1])
  const cols = Math.ceil((Math.max(...xs) - Math.min(...xs)) / step) + 1
  const lines = Math.ceil((Math.max(...ys) - Math.min(...ys)) / step) + 1
  const nodes: Point[][] = []
  for (let r = 0; r < lines; r++) {
    nodes.push([])
    for (let c = 0; c < cols; c++) {
      nodes[r].push([Math.min(...xs) + (c + random() - 0.5) * step, Math.min(...ys) + (r + random() - 0.5) * step])
    }
  }
  let d = ''
  const link = (a: Point, b?: Point) => {
    if (!b || random() > keep || !inside(a[0], a[1], poly) || !inside(b[0], b[1], poly)) return
    const at = (t: number) =>
      `${(a[0] + (b[0] - a[0]) * t + (random() - 0.5) * step * 0.4).toFixed(0)} ${(a[1] + (b[1] - a[1]) * t + (random() - 0.5) * step * 0.4).toFixed(0)}`
    d += `M${a[0].toFixed(0)} ${a[1].toFixed(0)}L${at(0.33)}L${at(0.66)}L${b[0].toFixed(0)} ${b[1].toFixed(0)}`
  }
  for (let r = 0; r < lines; r++) {
    for (let c = 0; c < cols; c++) {
      link(nodes[r][c], nodes[r][c + 1])
      link(nodes[r][c], nodes[r + 1]?.[c])
      if (random() < 0.2) link(nodes[r][c], nodes[r + 1]?.[c + 1])
    }
  }
  return d
}

function spots(poly: Point[], count: number, seed: number) {
  const random = makeRandom(seed)
  let d = ''
  let left = count
  while (left > 0) {
    const x = 700 + random() * 820
    const y = 120 + random() * 790
    if (!inside(x, y, poly)) continue
    d += `M${x.toFixed(0)} ${y.toFixed(0)}l${((random() - 0.5) * 14).toFixed(0)} ${((random() - 0.5) * 26).toFixed(0)}`
    left--
  }
  return d
}

const interior: Point[] = [[985, 110], [1200, 110], [1180, 300], [1120, 420], [1090, 620], [990, 620], [960, 420], [1000, 300]]
const inland: Point[] = [[1170, 110], [1480, 110], [1480, 200], [1380, 340], [1350, 380], [1345, 500], [1320, 600], [1240, 700], [1120, 760], [1080, 640], [1090, 450], [1170, 300]]
const west: Point[] = [[820, 330], [990, 300], [990, 620], [850, 640], [850, 480], [790, 440], [740, 420], [700, 340]]
const southwest: Point[] = [[780, 620], [960, 600], [960, 680], [860, 770], [800, 750], [740, 690]]
const south: Point[] = [[870, 790], [1060, 760], [1070, 850], [1040, 912], [860, 912]]
const core: Point[] = [[925, 650], [965, 612], [1050, 595], [1110, 640], [1140, 700], [1130, 790], [1060, 800], [1000, 770], [910, 770], [865, 830], [835, 835], [845, 770], [895, 710]]
const east: Point[] = [[1100, 640], [1160, 560], [1325, 560], [1318, 650], [1265, 740], [1200, 745], [1120, 750]]
const delta: Point[] = [[825, 915], [870, 830], [990, 805], [1060, 800], [1065, 850], [1045, 915]]
const northeast: Point[] = [[1340, 112], [1490, 112], [1494, 180], [1455, 260], [1400, 320], [1350, 370], [1370, 290], [1400, 230], [1410, 180]]

const roads = [network(interior, 19, 0.6, 7), network(inland, 15, 0.62, 13), network(west, 27, 0.6, 21), network(southwest, 24, 0.55, 5), network(south, 15, 0.65, 9)].join('')
const coreErrors = network(core, 12, 0.85, 3)
const errors = [network(east, 15, 0.68, 11), network(delta, 14, 0.66, 17), network(northeast, 13, 0.72, 29)].join('')
const errorSpots = [spots(interior, 60, 31), spots(inland, 85, 41), spots(west, 14, 43), spots(southwest, 12, 47), spots(east, 110, 53), spots(northeast, 120, 59), spots(delta, 70, 67)].join('')

function MapCanvas() {
  return (
    <svg viewBox="0 0 1114 264" preserveAspectRatio="xMinYMin slice" fill="none" role="img" aria-label="Map1" strokeLinejoin="round" className="min-h-0 w-full flex-1 basis-0 bg-white [&_path]:[vector-effect:non-scaling-stroke]">
      <g transform="translate(-4 -40) scale(.3827 .3333)">
        <g stroke="#89a547" strokeWidth="1.500">
          <path d={roads} />
          <path d="M250 158L325 180 385 215 412 250 440 238 490 240 540 203 535 190 562 160 570 120M505 150L560 155 605 172 640 155 715 120M660 120L668 140M490 240V275M490 262L560 260 552 235M540 203L560 215 565 245 590 250 597 230M565 245L590 280 615 315 655 350 672 390 690 430 720 460 760 470 790 460M615 315L580 320 527 328V338M655 350L650 365 632 362M655 350L645 378M667 433L690 440" />
          <path d="M810 120L822 180 830 260 815 315 810 345 860 372 925 365 960 365M748 232V245L800 243 830 258 910 275 912 255M910 275L938 265 975 225 985 180 990 140 925 125M940 265L935 330 960 365M685 255L712 262 710 305 755 290M710 305L728 318 730 390M672 390L730 382 820 388 870 390M760 300L820 290 850 295 845 315 815 320M790 320L775 370 780 400M412 250L400 262M355 280L385 282 412 255M840 460L838 520 838 640M838 560L870 540 900 570M838 600L890 580M730 685L770 690 830 720M790 640L800 680" />
        </g>
        <g stroke="#3d9857" strokeWidth="1.700">
          <path d="M370 122L345 124 290 135 250 158 248 205M345 124V140L330 165 275 213M520 122L510 145 480 160 435 163 422 205 370 207 325 223M590 122L570 150 565 180 540 200M422 205L415 255 385 280 352 283" />
          <path d="M752 590L745 610 727 625 732 690 737 735 755 790 740 840 722 870 702 912M965 590L945 640 915 690 875 730 855 790 840 820" />
          <path d="M1500 130V180L1480 235 1455 245M1485 125H1500M1485 190H1500M1350 420H1372M1325 580H1350M1315 620H1340M1310 635H1345M1300 655H1325M1280 690H1305M1250 735L1290 690M1145 760L1165 775" />
        </g>
        <g stroke="#ff7f7f" strokeLinecap="round">
          <path d={errors} strokeWidth="3.400" />
          <path d={coreErrors} strokeWidth="4.600" />
          <path d={errorSpots} strokeWidth="5" />
          <path d="M785 400L790 460 830 470 845 500 838 520M790 460L775 465M930 540L975 540 1010 480 1080 455M1010 480L1020 580 1060 580 1060 470M985 510L1000 490 1050 470M1010 455L1015 540 1040 510 1005 500M1160 560L1200 640M1190 590L1170 650" strokeWidth="5" />
          <path d="M330 155L336 152M412 243L414 258M562 157L566 160M598 280L601 292M612 308L615 322M672 383V395M725 460L729 464M775 395L778 408M815 312L822 322M824 435L822 445M855 372V376M832 638H842M792 672L797 678M804 715L808 720M979 218L983 222" strokeWidth="5" />
          <path d="M1510 120L1508 180 1490 235 1470 265 1435 295 1420 330 1400 365 1378 375 1372 430 1378 470 1365 530 1352 580 1348 625 1315 675 1300 710 1260 758 1195 760 1160 790 1120 795 1065 845 1068 912M1378 375L1355 350M1120 795L1100 770M1215 730V755" strokeWidth="4.500" />
        </g>
        <path d="M742 583L755 610 800 635 880 633 930 653M840 520L883 522 890 555 925 590 932 620 960 625M1072 122L1050 165 1045 215 1035 250M1158 522L1170 555 1190 500 1225 430 1280 385 1300 350 1345 348M1055 490L1052 560 1075 580 1110 605 1140 630 1165 670M1240 600L1265 580 1300 605M890 815L940 825 1000 830M980 870V908M945 755L970 800" stroke="#862058" strokeWidth="1.600" />
        <path d="M1340 540L1358 545M1350 475L1370 478M1418 285L1430 292" stroke="#5a2fb0" strokeWidth="1.700" />
        <path d="M1172 685L1180 715M1188 725L1193 730M1085 722L1088 728M1116 748L1120 752" stroke="#ffe01b" strokeWidth="8" strokeLinecap="round" />
        <path d="M103 328L18 413 8 405M18 413C60 475 100 510 130 535 170 570 190 590 235 665 262 730 258 800 249 912" stroke="#5a2fb0" strokeWidth="1.700" />
      </g>
      <g transform="translate(546 -40) scale(.37 .3333)" stroke="#ff7f7f" strokeWidth="4">
        <path d="M76 132L130 134 180 118M45 243L117 237 190 175 275 118M117 237L130 300 150 362 180 435 240 540 300 615 380 690 460 750 560 805 700 870 785 905M410 118L290 230 185 330 115 405 82 445M38 508L0 570 -40 641 -90 625" />
        <path d="M-55 375L28 358 82 447 165 550 285 650 380 720 480 785 600 840 780 903M-60 426L-12 433 38 508 78 568 125 612 200 660 280 712 380 765 500 815 640 865 780 903" />
        <path d="M-100 648L0 683 110 725 200 760 310 782 450 810 620 860 780 905M-162 740L-123 780 3 800 180 808 330 820 470 840 640 870 780 905M-328 795L-271 852 -38 843 0 841 200 850 400 868 600 885 780 905" />
        <path d="M530 815L700 875 780 903 620 882 700 892" strokeWidth="6" />
        <path d="M82 447L55 480 38 505M665 912L740 906M788 906L825 912" stroke="#5a2fb0" strokeWidth="1.700" />
      </g>
    </svg>
  )
}

function Divider({ className = 'h-5' }: { className?: string }) {
  return <span className={clsx('w-0.5 shrink-0 bg-[#c6c8c8]', className)} />
}

function MapView() {
  return (
    <section className="flex min-w-0 flex-col text-sm text-[#4c4c4c]">
      <div className="flex h-7 items-stretch">
        <button className="flex w-[95px] items-center gap-1.5 pl-[7px] text-[#262626]"><MapIcon />Map</button>
        <div className="flex w-[103px] items-center justify-between rounded-t bg-[#d4d5d8] pr-[7px] pl-1.5">
          <button className="flex items-center gap-1.5"><MapIcon />Map1</button>
          <button aria-label="Close Map1"><CloseIcon /></button>
        </div>
        <button aria-label="Map list" className="mr-1 ml-auto"><Chevron w={13} bold color="#666" /></button>
      </div>
      <div className="h-0.5 bg-[#d4d5d8]" />
      <div className="flex flex-1 flex-col border border-[#d9dbdd] bg-[#f7f9f8]">
        <MapCanvas />
        <div className="flex h-[29px] items-center pr-1 pl-1.5">
          <div className="mr-1 flex h-[27px] w-[125px] items-center border border-[#8b8d8d] bg-white px-1.5 text-[#262626]">
            <select aria-label="Map scale" className="min-w-0 flex-1 appearance-none outline-none"><option>1:42,198,748</option></select>
            <Caret />
          </div>
          <Divider />
          <button aria-label="Snapping" className="mr-1.5 ml-1.5 flex h-[26px] w-[26px] items-center justify-center bg-[#9fd2f2]"><SnapIcon w={20} color="#55606a" /></button>
          <button aria-label="Grid" className="mr-2.5">
            <Svg w={17}><path d="M1 1h15v15H1zM5 1v15M9 1v15M13 1v15M1 5h15M1 9h15M1 13h15" stroke="#808080" /></Svg>
          </button>
          <button aria-label="Dynamic constraints" className="mr-2">
            <Svg w={21}>
              <path d="M1 1h6v4H1zM14 10h5v4h-5z" stroke="#555" strokeWidth="1.400" />
              <path d="M14 1v6M11 4h7" stroke="#555" strokeWidth="1.400" />
              <path d="M2 18L20 16v4H2z" fill="#a9d7f2" />
              <path d="M3 14l9-7" stroke="#2d8fd0" strokeDasharray="3 2" strokeWidth="1.800" />
              <path d="M1 16h4v4H1z" fill="#3f8f46" />
            </Svg>
          </button>
          <button aria-label="Inference" className="mr-2">
            <Svg w={20}>
              <path d="M1 1h10v9H1z" fill="#dbe9d3" />
              <path d="M10 0v20M0 10h20" stroke="#555" strokeWidth="1.400" strokeDasharray="2 1.500" />
              <path d="M8 8h4v4H8z" fill="#555" />
            </Svg>
          </button>
          <button aria-label="Ground to grid" className="mr-2"><NorthAngle w={21} /></button>
          <Divider />
          <div className="flex flex-1 items-center justify-center gap-3">
            <span>58.0122877°W 27.3612588°S</span>
            <button aria-label="Coordinate units"><Chevron w={14} bold /></button>
          </div>
          <Divider />
          <button className="mx-1 flex h-[26px] items-center gap-1.5 bg-white px-0.5"><ZoomSelectionIcon />Selected Features: 5</button>
          <Divider />
          <button aria-label="Pause drawing" className="mx-2.5"><Svg w={14} h={18}><path d="M2.500 0v18M11 0v18" stroke="#6a6a6a" strokeWidth="5" /></Svg></button>
          <Divider />
          <button aria-label="Refresh map" className="ml-2"><RefreshIcon /></button>
        </div>
      </div>
    </section>
  )
}

/* ---------- error inspector ---------- */

const errorRows = [
  { first: 'PNL2017_Ferrovias 890', second: 'PNL2017_Ferrovias 978', selected: true },
  { first: 'PNL2017_Ferrovias 899', second: 'PNL2017_Ferrovias 1038', selected: true },
  { first: 'PNL2017_Ferrovias 545', second: 'PNL2017_Ferrovias 1251', selected: true },
  { first: 'PNL2017_Ferrovias 522', second: 'PNL2017_Ferrovias 1014', selected: true },
  { first: 'PNL2017_Ferrovias 528', second: 'PNL2017_Ferrovias 1022', selected: true },
  { first: 'PNL2017_Ferrovias 1366', second: 'PNL2017_Ferrovias 1381', selected: false },
  { first: 'PNL2017_Ferrovias', second: 'PNL2017_Ferrovias 1246', selected: false },
  { first: 'PNL2017_Ferrovias', second: 'PNL2017_Ferrovias 1267', selected: false },
  { first: 'PNL2017_Ferrovias', second: 'PNL2017_Ferrovias 766', selected: false },
]

function ErrorTable() {
  return (
    <table className="w-[842px] table-fixed border-collapse self-start text-left text-[13px] whitespace-nowrap">
      <thead>
        <tr className="h-8 bg-[#ebebeb] [&>th]:border [&>th]:border-t-0 [&>th]:border-[#cfcfcf] [&>th]:px-1.5 [&>th]:font-bold">
          <th className="w-[30px]" aria-label="Row" />
          <th className="w-[51px]" aria-label="Shape" />
          <th className="w-[169px]" aria-label="Feature 1" />
          <th className="w-[346px]">Rule</th>
          <th className="w-[168px]">Feature 2</th>
          <th className="w-[78px] !px-1">Exception</th>
        </tr>
      </thead>
      <tbody>
        {errorRows.map((row, i) => (
          <tr
            key={row.second}
            className={clsx(
              'h-[31px] [&>td]:border [&>td]:border-[#cfcfcf] [&>td]:px-px',
              row.selected ? 'bg-[#87ffff]' : i % 2 ? 'bg-[#ebebeb]' : 'bg-white',
            )}
          >
            <td className="bg-[#ebebeb]"><span className="pl-1">{i + 1}</span></td>
            <td>
              <span className="flex justify-center">
                <Svg w={21} h={17}>
                  <rect x="1" y="1" width="19" height="15" rx="3" stroke="#777" strokeWidth="1.500" />
                  <path d="M4 8h12M8 5v3M12 8v4M4 9h4" stroke="#777" strokeWidth="1.300" />
                </Svg>
              </span>
            </td>
            <td>{row.first}</td>
            <td>Must Not Overlap</td>
            <td>{row.second}</td>
            <td />
          </tr>
        ))}
      </tbody>
    </table>
  )
}

function ToolButton({ icon, label, className }: { icon: ReactNode; label: string; className?: string }) {
  return (
    <button className={clsx('flex h-7 items-center gap-1 whitespace-nowrap', className)}>
      {icon}
      {label}
    </button>
  )
}

function InspectorToolbar() {
  return (
    <div className="flex h-[37px] items-center border-t border-b-2 border-[#d0d2d4] bg-[#eff0f1] pr-2 pl-[65px]">
      <div className="mr-1.5 flex h-7 w-[187px] items-center gap-1.5 border border-[#8b8d8d] bg-white pr-1 pl-2">
        <TopologyIcon />
        <select aria-label="Topology layer" className="min-w-0 flex-1 appearance-none overflow-hidden text-[#262626] outline-none">
          <option>Brasil_Topology (Geodatabase)</option>
        </select>
        <Chevron w={10} bold />
      </div>
      <ToolButton
        label="Validate"
        icon={
          <Svg w={20}>
            <path d="M2 2h15v15H2z" stroke="#3f93cf" strokeWidth="2.500" strokeDasharray="3 1.500" />
            <path d="M5 5h9v9H5z" fill="#d9edf9" stroke="#3f93cf" />
            <path d="M6 12l7-6" stroke="#3f93cf" strokeWidth="2" />
            <path d="M9 14l4 4 6-7" stroke="#5aa65a" strokeWidth="1.800" />
          </Svg>
        }
      />
      <Divider className="mx-[11px] h-6" />
      <span className="mr-2 font-bold">Filter:</span>
      <ToolButton label="Rules" className="w-[100px] bg-[#9fd2f2] pl-2.5" icon={<FunnelIcon />} />
      <ToolButton label="Map Extent" className="ml-[3px] w-[107px] bg-[#9fd2f2] pl-0.5" icon={<FunnelIcon extent />} />
      <Divider className="mr-2 ml-2 h-6" />
      <span className="mr-2 font-bold">Selection:</span>
      <div className="flex gap-3">
        <ToolButton label="Zoom To" icon={<ZoomTableIcon />} />
        <ToolButton
          label="Switch"
          icon={
            <Svg w={20}>
              <path d="M1 1h7v10H1z" fill="#c2ecf8" stroke="#666" strokeWidth="1.300" />
              <path d="M9 7h10v12H9z" fill="#c2ecf8" stroke="#666" strokeWidth="1.300" />
              <path d="M12 3h5v5M14 6l3 3 2-3M2 14l2-3 2 3M4 12v6h4M12 10l3 8" stroke="#555" strokeWidth="1.500" />
            </Svg>
          }
        />
        <ToolButton label="Clear" icon={<SelectMapIcon w={20} h={20} />} />
        <ToolButton
          label="Features"
          icon={
            <Svg w={20}>
              <path d="M1 1h11v8H1z" fill="#dbe9f4" stroke="#666" strokeWidth="1.400" />
              <path d="M8 11h11v8H8zM8 15h11" fill="#b7d6ee" stroke="#666" strokeWidth="1.400" />
              <path d="M12 3h5v6M15 6l2 3 2-3" stroke="#555" strokeWidth="1.500" />
              <circle cx="4" cy="9" r="4" fill="#c96647" />
              <path d="M4 6.500v5" stroke="#fff" strokeWidth="1.300" />
            </Svg>
          }
        />
      </div>
      <button aria-label="Inspector menu" className="ml-auto"><BurgerIcon /></button>
    </div>
  )
}

function GridStatus() {
  return (
    <div className="flex h-[34px] items-center pr-1.5 pl-0.5">
      <button aria-label="Show all errors" className="mr-3 flex h-7 w-10 items-center justify-center border-2 border-[#4aa9e3] bg-[#bcbfc1]">
        <Svg w={19} h={17}>
          <path d="M1 1h17v15H1z" fill="#fff" stroke="#5c5c5c" strokeWidth="1.400" />
          <path d="M2 7h15M2 14.500h15" stroke="#b4ebfa" strokeWidth="3" />
          <path d="M1 5h17M1 9h17M1 13h17" stroke="#5c5c5c" />
        </Svg>
      </button>
      <button aria-label="Show selected errors" className="mr-[21px]">
        <Svg w={19} h={17}>
          <path d="M1 1h17v13H1z" fill="#b4ebfa" stroke="#5c5c5c" strokeWidth="1.400" />
          <path d="M1 5h17M1 9.500h17" stroke="#5c5c5c" strokeWidth="1.500" />
        </Svg>
      </button>
      <button aria-label="First error" className="mr-4"><Svg w={13} h={12}><path d="M13 0v12L4 6z" fill="#666" /><path d="M1.500 0v12" stroke="#666" strokeWidth="1.500" /></Svg></button>
      <button aria-label="Last error" className="mr-4"><Svg w={13} h={12}><path d="M0 0v12l9-6z" fill="#666" /><path d="M11.500 0v12" stroke="#666" strokeWidth="1.500" /></Svg></button>
      <span>5 of 9 selected</span>
      <div className="ml-auto flex items-center">
        <Divider />
        <button aria-label="Row height" className="mx-1.5">
          <Svg w={16} h={20}>
            <path d="M8 3v7M3.500 6L8 1.500 12.500 6" stroke="#a5cba3" strokeWidth="2" />
            <path d="M8 10v7M3.500 14L8 18.500 12.500 14" stroke="#f0cda6" strokeWidth="2" />
          </Svg>
        </button>
        <button aria-label="Zoom out" className="mx-2.5"><Svg w={8} h={3}><path d="M0 1.500h8" stroke="#555" strokeWidth="3" /></Svg></button>
        <input
          type="range"
          aria-label="Table zoom"
          defaultValue={50}
          className="h-4 w-[125px] appearance-none bg-[linear-gradient(90deg,#a3a3a3_50%,#d5d7d7_50%)] bg-[length:100%_4px] bg-center bg-no-repeat [&::-webkit-slider-thumb]:h-4 [&::-webkit-slider-thumb]:w-1 [&::-webkit-slider-thumb]:appearance-none [&::-webkit-slider-thumb]:bg-[#666]"
        />
        <button aria-label="Zoom in" className="mx-2"><Svg w={11}><path d="M5.500 0v11M0 5.500h11" stroke="#555" strokeWidth="2" /></Svg></button>
        <div className="mr-1.5 flex h-7 w-[76px] items-center bg-white px-1.5">
          <select aria-label="Table scale" className="min-w-0 flex-1 appearance-none outline-none"><option>100%</option></select>
          <Caret />
        </div>
        <Divider />
        <button aria-label="Refresh table" className="ml-2"><RefreshIcon /></button>
      </div>
    </div>
  )
}

function ErrorBadge() {
  return (
    <>
      <circle cx="15.500" cy="5" r="5" fill="#c96647" />
      <path d="M15.500 2v4M15.500 7v1.500" stroke="#fff" strokeWidth="1.500" />
    </>
  )
}

function FixPane() {
  return (
    <div className="flex min-w-0 flex-col">
      <nav className="flex h-[34px] gap-[13px] border-b-2 border-[#d4d6d8] pt-0.5 pl-2">
        <button className="h-6">Preview</button>
        <button className="h-6">Details</button>
        <button className="h-[27px] border-b-[3px] border-[#0079c9] font-medium">Fix</button>
      </nav>
      <div className="flex flex-1 flex-col border border-t-0 border-[#cfd1d3] px-2">
        <h3 className="pt-[21px] leading-5 font-bold">Available Fixes for Selected Errors:</h3>
        <div className="flex h-[70px] items-center justify-between pr-[9px] pl-2">
          <button disabled className="flex items-center gap-[5px] text-[#b0b0b0]"><OverlapIcon faded />Remove Overlap</button>
          <span className="whitespace-pre">5  Errors</span>
        </div>
        <div className="mt-auto mb-[26px] ml-1.5 flex gap-3 text-[#333]">
          <button className="flex h-[30px] items-center gap-2 border border-[#333] bg-white px-[13px]"><ExclaimIcon />Mark as Exception</button>
          <button className="flex h-[30px] items-center gap-2 border border-[#333] bg-white px-[13px]"><ClearExceptionIcon />Clear Exception</button>
        </div>
      </div>
      <div className="flex h-[34px] items-center gap-3.5 pl-[7px]">
        <span className="mr-auto">1 of 5 selected errors</span>
        <button aria-label="Select error"><Svg w={21}><path d="M2 5v14l4-3 2 5 2-1-2-5h4z" fill="#fff" stroke="#666" strokeWidth="1.400" /><ErrorBadge /></Svg></button>
        <button aria-label="Zoom to error"><Svg w={21}><MagnifyPlus /><ErrorBadge /></Svg></button>
        <button aria-label="Previous error"><Svg w={20} h={16}><path d="M0 8l9-8v5h11v6H9v5z" fill="#56a6de" /></Svg></button>
        <button aria-label="Next error"><Svg w={20} h={16}><path d="M20 8l-9-8v5H0v6h11v5z" fill="#56a6de" /></Svg></button>
      </div>
    </div>
  )
}

function MenuItem({ icon, label, active = false }: { icon?: ReactNode; label: string; active?: boolean }) {
  return (
    <button role="menuitem" className={clsx('flex h-8 items-center gap-2.5 pl-2', active ? 'bg-[#c2e7fa] text-[#1f4e75]' : 'text-[#1c1c1c]')}>
      <span className="flex w-[22px] justify-center">{icon}</span>
      {label}
    </button>
  )
}

function ContextMenu() {
  return (
    <div role="menu" className="absolute top-12 left-[3px] flex w-[204px] flex-col border border-[#cfcfcf] bg-white px-px pt-0.5 shadow-[2px_3px_8px_rgba(0,0,0,0.45)]">
      <MenuItem
        label="Flash"
        icon={
          <Svg w={20}>
            <path d="M10 0v5M10 15v5M0 10h5M15 10h5M3 3l4 4M13 13l4 4M17 3l-4 4M7 13l-4 4M6.500 1l1 4M13.500 1l-1 4M6.500 19l1-4M13.500 19l-1-4" stroke="#eba088" strokeWidth="1.200" />
            <path d="M7.500 7.500h5v5h-5z" fill="#fff" stroke="#666" strokeWidth="1.400" />
          </Svg>
        }
      />
      <MenuItem
        label="Zoom To"
        icon={
          <Svg w={20}>
            <path d="M12 12l7 7" stroke="#b98a52" strokeWidth="3.500" />
            <circle cx="7.500" cy="7.500" r="6.500" fill="#f0f8fd" stroke="#56a6de" strokeWidth="2" />
          </Svg>
        }
      />
      <MenuItem
        label="Pan To"
        icon={
          <Svg w={20}>
            <path d="M8 19C6 15 2 13 1 11c0-1 2-1 5 1L3 4c0-2 2-1 2 0l2 5L6 2c0-2 2-2 2 0l2 6 0-7c0-1 2-1 2 0l1 8 2-6c1-1 2 0 2 1-1 5-1 10 2 15" fill="#fafafa" stroke="#999" />
          </Svg>
        }
      />
      <MenuItem
        label="Pop-up"
        icon={
          <Svg w={20}>
            <path d="M2 1h16v12H9l-4 5v-5H1V1z" fill="#fff" stroke="#777" strokeWidth="1.500" />
            <path d="M4 4h4v6H4z" fill="#7fb37f" />
            <path d="M10 5h6M10 7.500h6M10 10h4" stroke="#4c9fd8" />
          </Svg>
        }
      />
      <MenuItem label="Select/Unselect" icon={<SelectMapIcon w={17} h={16} fill="#b2e8f7" />} />
      <hr className="my-1 border-[#8f8f8f]" />
      <MenuItem label="Rule Description" />
      <hr className="mt-px mb-0.5 border-t-2 border-[#8f8f8f]" />
      <MenuItem label="Remove Overlap" active icon={<OverlapIcon />} />
      <hr className="mt-0.5 mb-[5px] border-[#8f8f8f]" />
      <MenuItem label="Mark as Exception" icon={<ExclaimIcon />} />
      <MenuItem label="Clear Exception" icon={<ClearExceptionIcon />} />
    </div>
  )
}

function Tooltip() {
  return (
    <div role="tooltip" className="absolute top-[302px] left-[202px] w-[266px] border border-[#c4c4c4] bg-[#f9f9f9] px-[9px] pt-2.5 pb-2 text-[#262626] shadow-[1px_3px_4px_rgba(0,0,0,0.4)]">
      <p className="leading-5 font-bold text-black">Remove Overlap</p>
      <p className="mt-2 pr-5 pl-[9px] leading-5">Remove the overlapping portion of the feature that is causing the error.</p>
    </div>
  )
}

function ErrorInspector() {
  return (
    <section className="relative flex flex-1 flex-col rounded-t border border-[#1a82bf] bg-[#f7f9f8] text-sm text-[#4c4c4c]">
      <div className="flex h-[39px] flex-col justify-center"><PaneHeader title="Error Inspector: Map1" active help /></div>
      <InspectorToolbar />
      <div className="grid flex-1 grid-cols-[2fr_6px_1fr]">
        <div className="flex min-w-0 flex-col">
          <div className="ml-px flex flex-1 border border-[#cfd1d3] bg-white">
            <div className="flex flex-1 flex-col">
              <ErrorTable />
              <div className="mt-auto flex h-[21px] items-center justify-between bg-[#f4f4f4] px-2">
                <Svg w={7} h={10}><path d="M5 1L2 5l3 4" stroke="#c8c8c8" strokeWidth="1.300" /></Svg>
                <Svg w={7} h={10}><path d="M2 1l3 4-3 4" stroke="#c8c8c8" strokeWidth="1.300" /></Svg>
              </div>
            </div>
            <div className="flex w-[22px] flex-col items-center justify-between border-b-[21px] border-[#ebebeb] bg-[#f4f4f4] py-1.5">
              <Chevron up color="#c8c8c8" />
              <Chevron color="#c8c8c8" />
            </div>
          </div>
          <GridStatus />
        </div>
        <div className="bg-[#e1e2e2]" />
        <FixPane />
      </div>
      <ContextMenu />
      <Tooltip />
    </section>
  )
}

/* ---------- taskbar ---------- */

function OfficeIcon({ letter, color, children }: { letter: string; color: string; children: ReactNode }) {
  return (
    <Svg w={30}>
      {children}
      <rect x="0" y="7" width="16" height="16" rx="2" fill={color} />
      <text x="8" y="19.500" fontSize="12" fontWeight="700" fill="#fff" textAnchor="middle">{letter}</text>
    </Svg>
  )
}

const apps: { name: string; dot?: boolean; active?: boolean; icon: ReactNode }[] = [
  {
    name: 'Task View',
    icon: <Svg w={31} h={29}><rect x="8" y="0" width="23" height="21" rx="2" fill="#f2f2f2" /><rect x="0" y="8" width="23" height="21" rx="2" fill="#777" fillOpacity=".85" /></Svg>,
  },
  {
    name: 'Chat',
    icon: (
      <Svg w={30}>
        <path d="M15 1a14 14 0 1 1-8 26l-6 2 1-7A14 14 0 0 1 15 1z" fill="#6264c7" />
        <rect x="7" y="9" width="11" height="12" rx="2" fill="#fff" />
        <path d="M19 13l4-3v10l-4-3z" fill="#fff" />
      </Svg>
    ),
  },
  {
    name: 'Edge',
    icon: (
      <Svg w={30}>
        <circle cx="15" cy="15" r="15" fill="#1674c5" />
        <path d="M1 12C3-4 29-4 30 13c0 6-10 8-12 4 4-8-10-12-17-5z" fill="#3cc6b8" />
        <path d="M12 14c-6 4-2 14 8 14 4 0 7-2 8-5-5 3-13 1-14-4z" fill="#27242b" fillOpacity=".35" />
        <path d="M21 1c6 3 9 7 9 12 0 6-10 8-12 4 3-4 5-10 3-16z" fill="#63da7c" />
      </Svg>
    ),
  },
  {
    name: 'File Explorer',
    dot: true,
    icon: (
      <Svg w={31} h={28}>
        <path d="M0 3c0-2 1-3 3-3h7l3 4h18v22H0z" fill="#e8a33d" />
        <path d="M0 6h31v20c0 1-1 2-2 2H2c-1 0-2-1-2-2z" fill="#fbd35b" />
        <path d="M6 20h19v8H6z" fill="#1673b8" />
        <path d="M10 23h11" stroke="#0c4f86" strokeWidth="2" />
      </Svg>
    ),
  },
  {
    name: 'Outlook',
    dot: true,
    icon: (
      <OfficeIcon letter="O" color="#0f6cbd">
        <path d="M8 2h21v25H8z" fill="#1d86d8" />
        <path d="M18 2h11v9H18z" fill="#54c0f4" />
        <path d="M5 15l12 7 12-7v13H5z" fill="#3aa7e8" />
      </OfficeIcon>
    ),
  },
  {
    name: 'Mendeley',
    dot: true,
    icon: (
      <Svg w={30} h={28}>
        <path d="M0 0h30v28H0z" fill="#a4121f" />
        <circle cx="11" cy="11" r="2.500" fill="#fff" />
        <circle cx="19" cy="11" r="2.500" fill="#fff" />
        <path d="M6.500 20c0-5 6-5 8.500-1 2.500-4 8.500-4 8.500 1M11 13v4M19 13v4" stroke="#fff" strokeWidth="2.400" />
      </Svg>
    ),
  },
  {
    name: 'Word',
    dot: true,
    icon: (
      <OfficeIcon letter="W" color="#1d4fa5">
        <path d="M7 1h22v28H7z" fill="#2b7cd3" />
        <path d="M7 1h22v8H7z" fill="#46a5ee" />
        <path d="M7 20h22v9H7z" fill="#1b59b0" />
      </OfficeIcon>
    ),
  },
  {
    name: 'WhatsApp',
    icon: (
      <span className="flex size-[29px] items-center justify-center rounded-full bg-[#29c451] text-[25px] text-white"><FaWhatsapp /></span>
    ),
  },
  {
    name: 'Chrome',
    dot: true,
    icon: (
      <Svg w={30}>
        <circle cx="15" cy="15" r="15" fill="#31a350" />
        <path d="M2 7.500A15 15 0 0 1 28 7.500H15L9 18z" fill="#e33b2e" />
        <path d="M28 7.500A15 15 0 0 1 15 30l6.500-11.500V7.500z" fill="#fbc116" />
        <circle cx="15" cy="15" r="7" fill="#fff" />
        <circle cx="15" cy="15" r="5.500" fill="#2f7de1" />
      </Svg>
    ),
  },
  {
    name: 'Snipping Tool',
    dot: true,
    icon: (
      <Svg w={31} h={30}>
        <rect x="0" y="0" width="23" height="22" rx="2" fill="#f1f1f1" />
        <path d="M4 17V4h14v6" stroke="#d2402d" strokeWidth="3" strokeDasharray="3.500 2" />
        <path d="M9 16h17M18 10v17" stroke="#c9c9c9" strokeWidth="1.800" />
        <circle cx="27" cy="16" r="3" stroke="#2d9be0" strokeWidth="2.200" />
        <circle cx="17" cy="26" r="3" stroke="#2d9be0" strokeWidth="2.200" />
      </Svg>
    ),
  },
  {
    name: 'ArcGIS Pro',
    active: true,
    icon: (
      <Svg w={28} h={30}>
        <path d="M14 0l13 7v16l-13 7-13-7V7z" fill="#0b6fe0" />
        <circle cx="14" cy="15" r="8" stroke="#fff" strokeWidth="2" />
        <path d="M8 10c3-3 7-3 9-2l-2 3 3 2-1 3-3 1-2 4c-1-3-1-5-2-6z" fill="#fff" />
      </Svg>
    ),
  },
  {
    name: 'PowerPoint',
    dot: true,
    icon: (
      <OfficeIcon letter="P" color="#c13b1b">
        <circle cx="16" cy="15" r="14" fill="#e9623c" />
        <path d="M16 1a14 14 0 0 1 14 14H16z" fill="#ff9a70" />
      </OfficeIcon>
    ),
  },
  {
    name: 'Norton',
    dot: true,
    icon: (
      <Svg w={38} h={36} className="-mt-1.5 ml-1.5">
        <rect x="0" y="6" width="30" height="30" rx="3" fill="#fde62a" />
        <circle cx="14" cy="21" r="8.500" stroke="#222" strokeWidth="3" />
        <path d="M10 20l4 4 8-9" stroke="#222" strokeWidth="3" />
        <circle cx="27" cy="9" r="9" fill="#0d7a43" />
        <path d="M22 9l4 4 6-8" stroke="#fff" strokeWidth="2.500" />
      </Svg>
    ),
  },
]

function Taskbar() {
  return (
    <footer className="grid h-[60px] grid-cols-[1fr_auto_1fr] items-center border-t border-[#46403f] bg-[linear-gradient(90deg,#352212_0%,#28242b_14%,#28242c_82%,#33231a_100%)] text-sm text-white">
      <button className="flex items-center gap-2 pl-6 text-left leading-5">
        <Svg w={32} h={22}>
          <path d="M8 21a7 7 0 0 1-1-14 9.500 9.500 0 0 1 18 0 7 7 0 0 1-1 14z" fill="#a9c6f6" />
          <path d="M8 21a7 7 0 0 1 0-13c5 0 6 3 8 5 3-4 8-5 12-3a7 7 0 0 1-4 11z" fill="#d3e2fb" />
        </Svg>
        <span>
          <span className="flex">20°C</span>
          <span className="text-[#c9c6c8]">Nublado</span>
        </span>
      </button>
      <div className="flex items-center">
        <button aria-label="Start" className="flex w-[55px] justify-center">
          <Svg w={29}><path d="M0 0h14v14H0zM15 0h14v14H15zM0 15h14v14H0zM15 15h14v14H15z" fill="#2fb4f7" /><path d="M0 0h14v14H0z" fill="#72d9fc" /></Svg>
        </button>
        <button className="mx-[5px] flex h-10 w-[141px] items-center justify-center gap-1.5 rounded-full bg-[#373239]">
          <Svg w={19} h={19}><circle cx="8.500" cy="8.500" r="6.500" stroke="#fff" strokeWidth="1.900" /><path d="M13 13l5 5" stroke="#fff" strokeWidth="1.900" /></Svg>
          Pesquisar
        </button>
        {apps.map((app) => (
          <button
            key={app.name}
            aria-label={app.name}
            className={clsx('flex h-[50px] flex-col items-center justify-between pt-2.5 pb-px', app.active ? 'mx-0.5 w-[51px] rounded bg-[#3a353d]' : 'w-[55px]')}
          >
            <span className="flex h-[30px] items-center">{app.icon}</span>
            {app.active && <span className="h-[3px] w-5 rounded-full bg-[#4cc2ff]" />}
            {app.dot && <span className="h-[3px] w-[7px] rounded-full bg-[#9b989c]" />}
          </button>
        ))}
      </div>
      <div className="flex items-center justify-end pr-[25px] leading-5">
        <button aria-label="Hidden icons" className="mr-2.5"><Chevron w={18} up color="#fff" /></button>
        <Svg w={20} h={15} className="mr-[17px]"><path d="M4 14a4 4 0 0 1 0-8 6 6 0 0 1 11-1 5 5 0 0 1 1 9z" fill="#b9b9b9" /><path d="M6 14l7-7 6 4-2 3z" fill="#fff" /></Svg>
        <button className="mr-[22px] text-center"><span className="flex justify-center">POR</span>PTB2</button>
        <Svg w={20} h={18} className="mr-2">
          <path d="M1 7c5-6 13-6 18 0M4 10.500c4-4 8-4 12 0M7 13.500c2-2 4-2 6 0" stroke="#fff" strokeWidth="1.800" />
          <circle cx="10" cy="16" r="1.800" fill="#fff" />
        </Svg>
        <Svg w={20} h={18} className="mr-2.5">
          <path d="M1 6h3l5-4v14l-5-4H1z" stroke="#fff" strokeWidth="1.500" />
          <path d="M12 6c1.500 2 1.500 4 0 6" stroke="#fff" strokeWidth="1.500" />
          <path d="M15 3c3 4 3 8 0 12" stroke="#77737a" strokeWidth="1.500" />
        </Svg>
        <Svg w={21} h={14} className="mr-[21px]"><rect x="1" y="1" width="16" height="12" rx="3" stroke="#fff" strokeWidth="1.600" /><path d="M4 4h7v6H4z" fill="#fff" /><path d="M19 5v4" stroke="#fff" strokeWidth="2" /></Svg>
        <button className="mr-2.5 text-right"><span className="flex justify-end">08:31</span>30/12/2022</button>
        <span className="flex size-5 items-center justify-center rounded-full bg-[#4cc2ff] text-xs text-[#1c1c1c]">4</span>
      </div>
    </footer>
  )
}

export default function App() {
  return (
    <div className="flex min-h-screen flex-col bg-[#ebebeb] font-['Open_Sans',sans-serif]">
      <div className="bg-[#f7f9f8]">
        <TitleBar />
        <RibbonTabs />
        <Ribbon />
      </div>
      <main className="flex flex-1 flex-col gap-2 pt-2.5 pr-2 pb-2 pl-[7px]">
        <div className="grid grid-cols-[398px_1fr_376px] gap-2">
          <ContentsPane />
          <MapView />
          <CatalogPane />
        </div>
        <ErrorInspector />
      </main>
      <Taskbar />
    </div>
  )
}
